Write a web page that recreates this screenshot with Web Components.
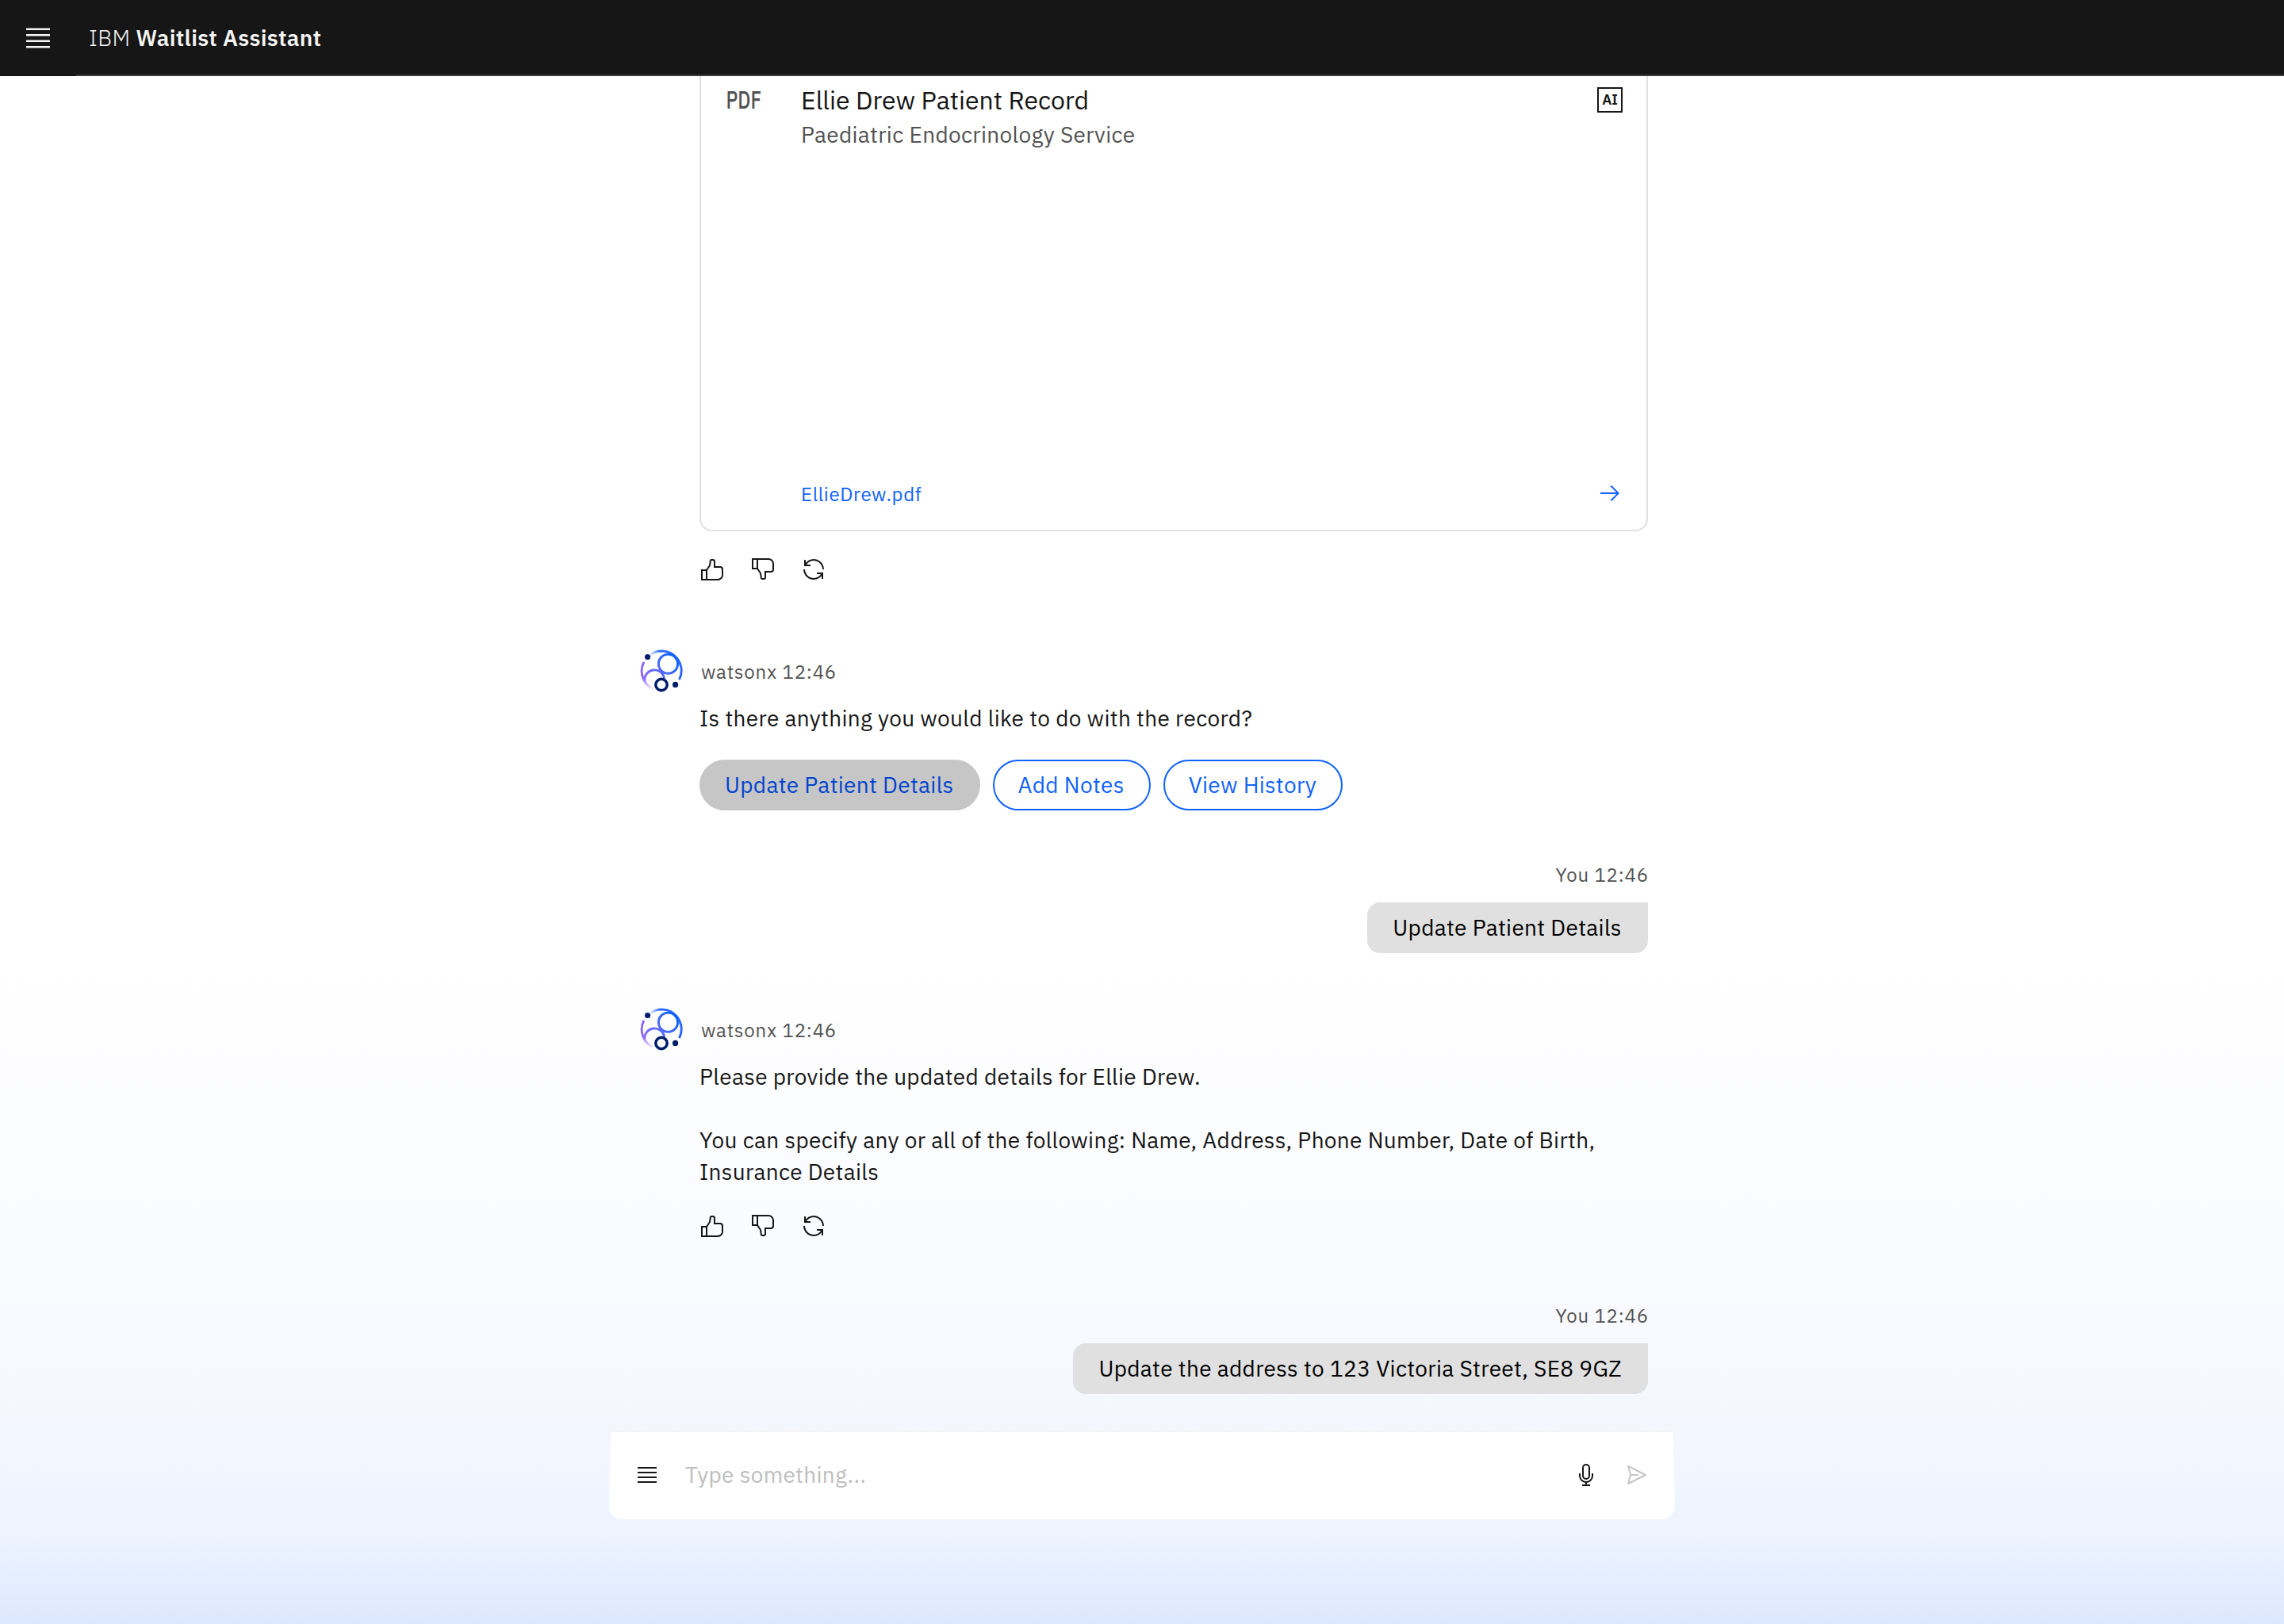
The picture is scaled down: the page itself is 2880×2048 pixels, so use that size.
<!DOCTYPE html>
<html lang="en">
<head>
<meta charset="utf-8">
<title>IBM Waitlist Assistant</title>
<style>
  html,
  body {
    margin: 0;
    height: 100%;
  }

  body {
    font-family: "IBM Plex Sans", "Noto Sans", sans-serif;
    font-size: 28px;
    line-height: 40px;
    letter-spacing: .32px;
    color: #161616;
    overflow: hidden;
  }
</style>
</head>
<body>
<waitlist-app>
  <app-header slot="header" company="IBM">Waitlist Assistant</app-header>

  <document-card type="PDF" file="EllieDrew.pdf">
    Ellie Drew Patient Record
    <span slot="subtitle">Paediatric Endocrinology Service</span>
  </document-card>
  <feedback-actions></feedback-actions>

  <bot-message name="watsonx" time="12:46" style="margin-top: 84px">
    Is there anything you would like to do with the record?
  </bot-message>
  <chip-group>
    <reply-chip selected>Update Patient Details</reply-chip>
    <reply-chip>Add Notes</reply-chip>
    <reply-chip>View History</reply-chip>
  </chip-group>

  <user-message name="You" time="12:46" style="margin-top: 65px">Update Patient Details</user-message>

  <bot-message name="watsonx" time="12:46" style="margin-top: 68px">
    Please provide the updated details for Ellie Drew.<br><br>
    You can specify any or all of the following: Name, Address, Phone Number, Date of Birth, Insurance Details
  </bot-message>
  <feedback-actions></feedback-actions>

  <user-message name="You" time="12:46" style="margin-top: 81px">Update the address to 123 Victoria Street, SE8 9GZ</user-message>

  <chat-input slot="footer" placeholder="Type something..."></chat-input>
</waitlist-app>

<script>
const ICONS = {
  menu: `<path d="M4 6h24v2H4zM4 12h24v2H4zM4 18h24v2H4zM4 24h24v2H4z"/>`,
  thumbsUp: `<path d="M26,12H20V6a3.0033,3.0033,0,0,0-3-3H14.8672a2.0094,2.0094,0,0,0-1.98,1.7173l-.8453,5.9165L8.4648,16H2V30H23a7.0078,7.0078,0,0,0,7-7V16A4.0045,4.0045,0,0,0,26,12ZM8,28H4V18H8Zm20-5a5.0057,5.0057,0,0,1-5,5H10V17.3027l3.9578-5.9365L14.8672,5H17a1.0008,1.0008,0,0,1,1,1v8h8a2.0025,2.0025,0,0,1,2,2Z"/>`,
  thumbsDown: `<path d="M30,16V9a7.0078,7.0078,0,0,0-7-7H2V16H8.4648l3.5771,5.3662.8453,5.9165A2.0094,2.0094,0,0,0,14.8672,29H17a3.0033,3.0033,0,0,0,3-3V20h6A4.0045,4.0045,0,0,0,30,16ZM8,14H4V4H8Zm20,2a2.0025,2.0025,0,0,1-2,2H18v8a1.0008,1.0008,0,0,1-1,1H14.8672l-.9094-6.3662L10,14.6973V4H23a5.0057,5.0057,0,0,1,5,5Z"/>`,
  renew: `<path d="M12,10H6.78A11,11,0,0,1,27,16h2A13,13,0,0,0,6,7.68V4H4v8h8Z"/><path d="M20,22h5.22A11,11,0,0,1,5,16H3a13,13,0,0,0,23,8.32V28h2V20H20Z"/>`,
  arrow: `<path d="M18 6 16.57 7.393 24.15 15 4 15 4 17 24.15 17 16.57 24.573 18 26 28 16z"/>`,
  microphone: `<path d="M23,14v3A7,7,0,0,1,9,17V14H7v3a9,9,0,0,0,8,8.94V28H11v2H21V28H17V25.94A9,9,0,0,0,25,17V14Z"/><path d="M16,22a5,5,0,0,0,5-5V7A5,5,0,0,0,11,7V17A5,5,0,0,0,16,22ZM13,7a3,3,0,0,1,6,0V17a3,3,0,0,1-6,0Z"/>`,
  send: `<path d="M27.45,15.11l-22-11a1,1,0,0,0-1.08.12,1,1,0,0,0-.33,1L7,16,4,26.74A1,1,0,0,0,5,28a1,1,0,0,0,.45-.11l22-11a1,1,0,0,0,0-1.78ZM6.82,24.9,8.76,17H18V15H8.76L6.82,7.1,24.26,16Z"/>`
};

class BaseElement extends HTMLElement {
  connectedCallback() {
    this.attachShadow({ mode: "open" });
    this.shadowRoot.innerHTML = this.render();
  }

  attr(name) {
    return this.getAttribute(name) || "";
  }
}

// <ui-icon name="menu"> - size and colour come from --size and color
class UiIcon extends BaseElement {
  render() {
    return `
      <style>
        :host {
          display: block;
          flex: none;
          width: var(--size, 32px);
          height: var(--size, 32px);
        }
        svg {
          display: block;
          width: 100%;
          height: 100%;
          fill: currentColor;
        }
      </style>
      <svg viewBox="0 0 32 32">${ICONS[this.attr("name")]}</svg>`;
  }
}

class WaitlistApp extends BaseElement {
  render() {
    return `
      <style>
        :host {
          display: flex;
          flex-direction: column;
          height: 100vh;
          background: linear-gradient(#fff 0, #fff 1180px, #fafbff 1600px, #f4f7ff 1790px, #edf4ff 1935px, #dce8fe 2048px);
        }
        main {
          flex: 1;
          min-height: 0;
          overflow: hidden;
          display: flex;
          flex-direction: column;
          justify-content: flex-end;
          box-sizing: border-box;
          width: 1273px;
          margin-left: 806px;
          padding: 0 1px 46px 0;
        }
      </style>
      <slot name="header"></slot>
      <main><slot></slot></main>
      <slot name="footer"></slot>`;
  }
}

class AppHeader extends BaseElement {
  render() {
    return `
      <style>
        :host {
          display: flex;
          flex: none;
          height: 96px;
          background: #161616;
          color: #f4f4f4;
        }
        .menu {
          width: 96px;
          display: grid;
          place-items: center;
          --size: 40px;
        }
        .title {
          flex: 1;
          display: flex;
          align-items: center;
          box-sizing: border-box;
          padding: 2px 0 0 16px;
          border-bottom: 2px solid #393939;
          letter-spacing: .36px;
          white-space: pre;
        }
        .company { font-weight: 300; }
        .product { font-weight: 600; }
      </style>
      <div class="menu"><ui-icon name="menu"></ui-icon></div>
      <div class="title"><span class="company">${this.attr("company")} </span><span class="product"><slot></slot></span></div>`;
  }
}

class DocumentCard extends BaseElement {
  render() {
    return `
      <style>
        :host {
          display: grid;
          grid-template-columns: 96px 1fr 32px;
          grid-template-rows: auto auto 1fr auto;
          flex: none;
          box-sizing: border-box;
          height: 596px;
          margin-left: 76px;
          padding: 30px 30px 24px;
          border: 2px solid #e0e0e0;
          border-radius: 16px;
          background: #fff;
        }
        .type {
          width: 64px;
          height: 40px;
          fill: #525252;
          font-size: 31px;
          font-weight: 500;
          letter-spacing: 0;
        }
        .title {
          font-size: 32px;
          letter-spacing: 0;
        }
        .subtitle {
          grid-column: 2;
          margin-top: 4px;
          color: #525252;
        }
        .badge {
          box-sizing: border-box;
          width: 32px;
          height: 32px;
          margin-top: 4px;
          border: 2px solid #161616;
          font-size: 18px;
          font-weight: 600;
          line-height: 28px;
          letter-spacing: 0;
          text-align: center;
        }
        .file {
          grid-column: 2;
          grid-row: 4;
          font-size: 24px;
          line-height: 32px;
          letter-spacing: .64px;
          color: #0f62fe;
          margin-top: 1px;
        }
        ui-icon {
          grid-column: 3;
          grid-row: 4;
          color: #0f62fe;
          margin-bottom: 6px;
        }
      </style>
      <svg class="type" viewBox="0 0 64 40"><text x="1.5" y="30.7" textLength="44.5" lengthAdjust="spacingAndGlyphs">${this.attr("type")}</text></svg>
      <div class="title"><slot></slot></div>
      <div class="badge">AI</div>
      <div class="subtitle"><slot name="subtitle"></slot></div>
      <div class="file">${this.attr("file")}</div>
      <ui-icon name="arrow"></ui-icon>`;
  }
}

class FeedbackActions extends BaseElement {
  render() {
    return `
      <style>
        :host {
          display: flex;
          flex: none;
          gap: 32px;
          margin: 32px 0 0 76px;
        }
      </style>
      <ui-icon name="thumbsUp"></ui-icon>
      <ui-icon name="thumbsDown"></ui-icon>
      <ui-icon name="renew"></ui-icon>`;
  }
}

class WatsonxAvatar extends BaseElement {
  render() {
    return `
      <style>
        :host {
          display: block;
          width: 56px;
          height: 56px;
        }
        svg {
          display: block;
          fill: none;
          stroke-width: 2.9;
        }
      </style>
      <svg width="56" height="56" viewBox="0 0 56 56">
        <defs>
          <linearGradient id="ring" gradientUnits="userSpaceOnUse" x1="6" y1="46" x2="42" y2="12">
            <stop offset="0" stop-color="#a56eff"/>
            <stop offset="1" stop-color="#0f62fe"/>
          </linearGradient>
          <linearGradient id="top" gradientUnits="userSpaceOnUse" x1="12" y1="7" x2="26" y2="3">
            <stop offset="0" stop-color="#4589ff" stop-opacity="0"/>
            <stop offset="1" stop-color="#2b67ff"/>
          </linearGradient>
          <linearGradient id="left" gradientUnits="userSpaceOnUse" x1="8" y1="34" x2="19" y2="52">
            <stop offset="0" stop-color="#8a66ff"/>
            <stop offset="1" stop-color="#a56eff" stop-opacity="0"/>
          </linearGradient>
        </defs>
        <path stroke="url(#top)" d="M12.8 8.4A24.9 24.9 0 0 1 50.5 39.2"/>
        <path stroke="url(#left)" d="M5.9 16.9A24.9 24.9 0 0 0 18 51"/>
        <circle stroke="url(#ring)" cx="36.5" cy="19.2" r="12.1"/>
        <path stroke="url(#ring)" d="M6.9 40.6A12.4 12.4 0 1 1 31.6 38"/>
        <circle cx="28" cy="45.5" r="7.2" stroke="#001d6c" stroke-width="3.5"/>
        <circle cx="10.6" cy="10.5" r="3.6" fill="#001d6c"/>
        <circle cx="45.6" cy="45.4" r="3.6" fill="#001d6c"/>
      </svg>`;
  }
}

class BotMessage extends BaseElement {
  render() {
    return `
      <style>
        :host {
          display: grid;
          grid-template-columns: 76px 1fr;
          align-items: center;
          flex: none;
        }
        .meta {
          padding: 2px 0 0 2px;
          font-size: 24px;
          line-height: 32px;
          letter-spacing: .8px;
          color: #525252;
        }
        .text {
          grid-column: 2;
          margin-top: 12px;
        }
      </style>
      <watsonx-avatar></watsonx-avatar>
      <div class="meta">${this.attr("name")} ${this.attr("time")}</div>
      <div class="text"><slot></slot></div>`;
  }
}

class UserMessage extends BaseElement {
  render() {
    return `
      <style>
        :host {
          display: flex;
          flex-direction: column;
          align-items: flex-end;
          flex: none;
          gap: 19px;
        }
        .meta {
          margin-right: -1px;
          font-size: 24px;
          line-height: 32px;
          letter-spacing: .8px;
          color: #525252;
        }
        .bubble {
          padding: 12px 33.2px 12px 32px;
          border-radius: 16px 0 16px 16px;
          background: #e0e0e0;
          color: #000;
        }
      </style>
      <div class="meta">${this.attr("name")} ${this.attr("time")}</div>
      <div class="bubble"><slot></slot></div>`;
  }
}

class ChipGroup extends BaseElement {
  render() {
    return `
      <style>
        :host {
          display: flex;
          flex: none;
          gap: 16px;
          margin: 32px 0 0 76px;
        }
      </style>
      <slot></slot>`;
  }
}

class ReplyChip extends BaseElement {
  render() {
    return `
      <style>
        :host {
          display: block;
          padding: 10px 31px 10px 30px;
          border: 2px solid #0f62fe;
          border-radius: 32px;
          color: #0f62fe;
        }
        :host([selected]) {
          border-color: #c6c6c6;
          background: #c6c6c6;
          color: #0043ce;
        }
      </style>
      <slot></slot>`;
  }
}

class ChatInput extends BaseElement {
  render() {
    return `
      <style>
        :host {
          display: flex;
          align-items: center;
          flex: none;
          box-sizing: border-box;
          width: 1344px;
          height: 112px;
          margin: 0 auto 132px;
          padding: 0 30px;
          border: 2px solid transparent;
          border-radius: 0 0 16px 16px;
          background:
            linear-gradient(#fff, #fff) padding-box,
            linear-gradient(#f4f4f4, #fff) border-box;
        }
        .placeholder {
          flex: 1;
          margin-left: 32px;
          color: #bebebe;
        }
        .send {
          margin-left: 32px;
          color: #c6c6c6;
        }
      </style>
      <ui-icon name="menu"></ui-icon>
      <div class="placeholder">${this.attr("placeholder")}</div>
      <ui-icon name="microphone"></ui-icon>
      <ui-icon class="send" name="send"></ui-icon>`;
  }
}

customElements.define("ui-icon", UiIcon);
customElements.define("watsonx-avatar", WatsonxAvatar);
customElements.define("waitlist-app", WaitlistApp);
customElements.define("app-header", AppHeader);
customElements.define("document-card", DocumentCard);
customElements.define("feedback-actions", FeedbackActions);
customElements.define("bot-message", BotMessage);
customElements.define("user-message", UserMessage);
customElements.define("chip-group", ChipGroup);
customElements.define("reply-chip", ReplyChip);
customElements.define("chat-input", ChatInput);
</script>
</body>
</html>
